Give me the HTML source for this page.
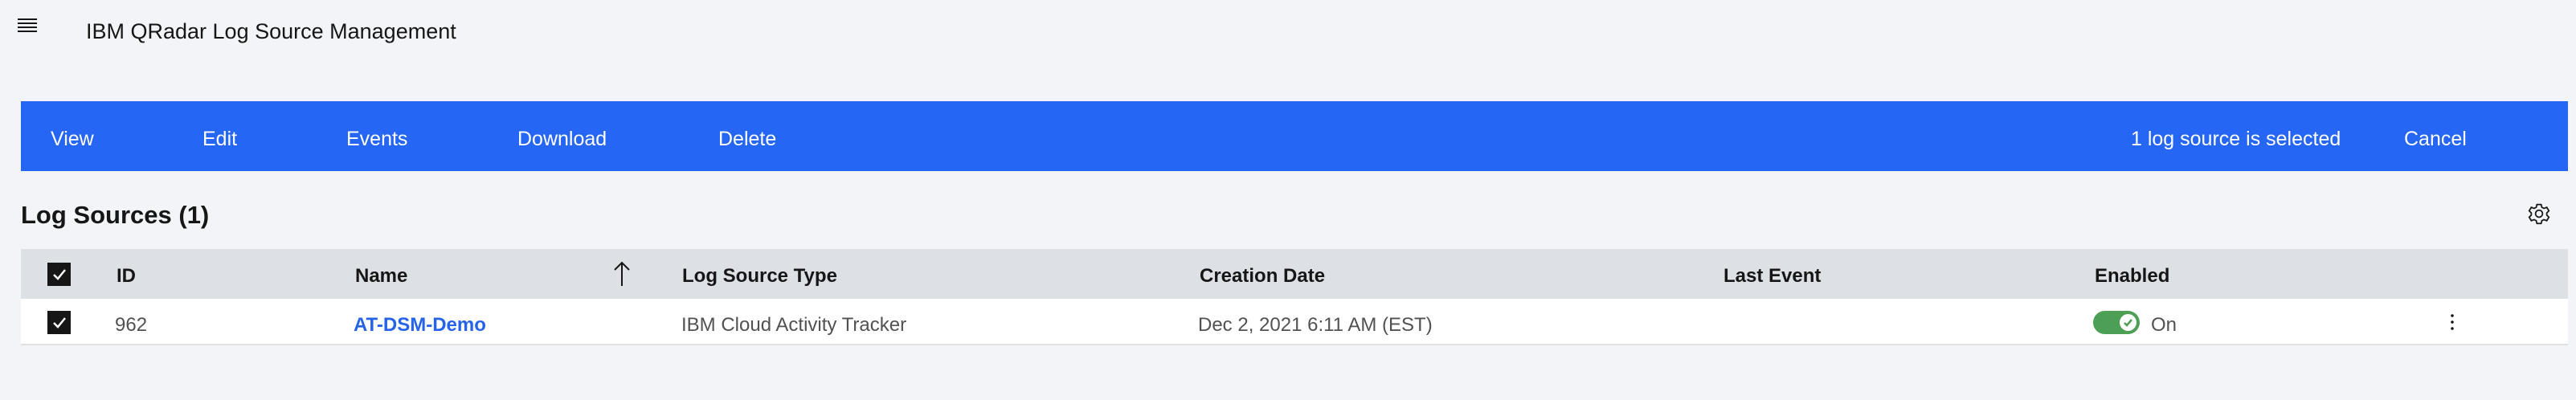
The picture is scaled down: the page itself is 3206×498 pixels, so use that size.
<!DOCTYPE html>
<html><head><meta charset="utf-8"><style>
*{margin:0;padding:0;box-sizing:border-box}
body{width:3206px;height:498px;background:#f2f4f8;font-family:"Liberation Sans",sans-serif;color:#161616;position:relative;overflow:hidden}
.a{position:absolute;white-space:nowrap}
.bar{position:absolute;left:26px;top:126px;width:3170px;height:87px;background:#2566f5}
.bar span{position:absolute;top:33px;color:#fff;font-size:25px}
.hdr{position:absolute;left:26px;top:310px;width:3170px;height:62px;background:#dde0e5}
.row{position:absolute;left:26px;top:372px;width:3170px;height:58px;background:#fff;border-bottom:2px solid #e0e0e0}
.hdr span{position:absolute;top:20px;font-size:24px;font-weight:600}
.row span{position:absolute;top:19px;font-size:24px;color:#525252}
.cb{position:absolute;left:33px;width:29px;height:29px;background:#161616}
</style></head><body>
<svg class="a" style="left:22px;top:22px" width="24" height="18"><g stroke="#161616" stroke-width="2"><line x1="0" y1="2" x2="24" y2="2"/><line x1="0" y1="7" x2="24" y2="7"/><line x1="0" y1="12" x2="24" y2="12"/><line x1="0" y1="17" x2="24" y2="17"/></g></svg>
<div class="a" style="left:107px;top:24px;font-size:27px">IBM QRadar Log Source Management</div>
<div class="bar">
<span style="left:37px">View</span><span style="left:226px">Edit</span><span style="left:405px">Events</span><span style="left:618px">Download</span><span style="left:868px">Delete</span>
<span style="left:2626px">1 log source is selected</span><span style="left:2966px">Cancel</span>
</div>
<div class="a" style="left:26px;top:250px;font-size:31px;font-weight:bold">Log Sources (1)</div>
<svg class="a" style="left:3146px;top:252px" width="28" height="28" viewBox="0 0 32 32"><g fill="none" stroke="#161616" stroke-width="2"><circle cx="16" cy="16" r="5"/><path d="M13 3h6l1 4 3 1.5 4-1.5 3 5-3 3v3l3 3-3 5-4-1.5-3 1.5-1 4h-6l-1-4-3-1.5-4 1.5-3-5 3-3v-3l-3-3 3-5 4 1.5 3-1.5z"/></g></svg>
<div class="hdr">
<div class="cb" style="top:17px"><svg width="29" height="29"><path d="M8 15l5 5 9-11" stroke="#fff" stroke-width="2.5" fill="none"/></svg></div>
<span style="left:119px">ID</span><span style="left:416px">Name</span>
<svg class="a" style="left:737px;top:14px" width="22" height="32"><path d="M11 32V3M2 12l9-9 9 9" stroke="#161616" stroke-width="2" fill="none"/></svg>
<span style="left:823px">Log Source Type</span><span style="left:1467px">Creation Date</span><span style="left:2119px">Last Event</span><span style="left:2581px">Enabled</span>
</div>
<div class="row">
<div class="cb" style="top:15px"><svg width="29" height="29"><path d="M8 15l5 5 9-11" stroke="#fff" stroke-width="2.5" fill="none"/></svg></div>
<span style="left:117px">962</span><span style="left:414px;color:#2563eb;font-weight:bold">AT-DSM-Demo</span>
<span style="left:822px">IBM Cloud Activity Tracker</span><span style="left:1465px">Dec 2, 2021 6:11 AM (EST)</span>
<div class="a" style="left:2579px;top:15px;width:58px;height:29px;border-radius:15px;background:#4c9f55"><div style="position:absolute;right:4px;top:4px;width:21px;height:21px;border-radius:50%;background:#fff"><svg width="21" height="21"><path d="M6 11l3 3 6-7" stroke="#4c9f55" stroke-width="2.5" fill="none"/></svg></div></div>
<span style="left:2651px">On</span>
<svg class="a" style="left:3024px;top:19px" width="4" height="20"><circle cx="2" cy="2" r="1.8" fill="#161616"/><circle cx="2" cy="10" r="1.8" fill="#161616"/><circle cx="2" cy="18" r="1.8" fill="#161616"/></svg>
</div>
</body></html>
